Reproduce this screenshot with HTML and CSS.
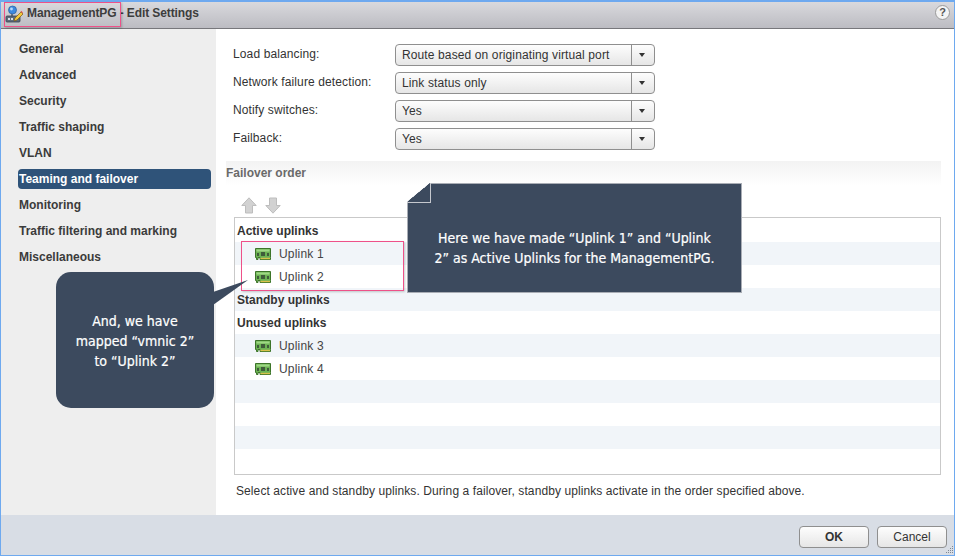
FILE: index.html
```html
<!DOCTYPE html>
<html lang="en">
<head>
<meta charset="utf-8">
<title>ManagementPG - Edit Settings</title>
<link rel="stylesheet" href="styles.css">
</head>
<body>
<div class="window">
  <header class="titlebar">
    <svg class="title-icon" width="18" height="18" viewBox="0 0 18 18">
      <rect x="1" y="11" width="14" height="6" rx="1" fill="#5d6b7c" stroke="#39424e" stroke-width=".8"/>
      <rect x="3" y="13" width="2" height="2" fill="#d5dde6"/><rect x="6" y="13" width="2" height="2" fill="#d5dde6"/>
      <path d="M7 11V8" stroke="#39424e" stroke-width="1.2"/>
      <circle cx="7.500" cy="5" r="4" fill="#3d8ae0" stroke="#2b5f9e" stroke-width=".7"/>
      <circle cx="6.500" cy="4" r="1.400" fill="#b7dafa"/>
      <path d="M9 16l1-3 6-6 2 2-6 6z" fill="#f2c83c" stroke="#7a5a12" stroke-width=".7"/>
      <path d="M15.500 6.500l2 2 .5-.8-1.700-1.900z" fill="#e4574c"/>
    </svg>
    <span class="title-text">ManagementPG - Edit Settings</span>
    <span class="help">?</span>
  </header>
  <div class="body">
    <nav class="sidebar">
      <a class="nav-item">General</a>
      <a class="nav-item">Advanced</a>
      <a class="nav-item">Security</a>
      <a class="nav-item">Traffic shaping</a>
      <a class="nav-item">VLAN</a>
      <a class="nav-item selected">Teaming and failover</a>
      <a class="nav-item">Monitoring</a>
      <a class="nav-item">Traffic filtering and marking</a>
      <a class="nav-item">Miscellaneous</a>
    </nav>
    <main class="content">
      <div class="form">
        <div class="form-row"><label class="form-label">Load balancing:</label><div class="select"><span class="select-value">Route based on originating virtual port</span><span class="select-arrow"></span></div></div>
        <div class="form-row"><label class="form-label">Network failure detection:</label><div class="select"><span class="select-value">Link status only</span><span class="select-arrow"></span></div></div>
        <div class="form-row"><label class="form-label">Notify switches:</label><div class="select"><span class="select-value">Yes</span><span class="select-arrow"></span></div></div>
        <div class="form-row"><label class="form-label">Failback:</label><div class="select"><span class="select-value">Yes</span><span class="select-arrow"></span></div></div>
      </div>
      <h2 class="section-title">Failover order</h2>
      <div class="toolbar">
        <svg width="16" height="17" viewBox="0 0 16 17"><path d="M8 .8L15.200 8.500H11.500V16H4.500V8.500H.8z" fill="#d2d2d2" stroke="#bdbdbd"/></svg>
        <svg width="16" height="17" viewBox="0 0 16 17"><path d="M8 16.200L15.200 8.500H11.500V1H4.500V8.500H.8z" fill="#d2d2d2" stroke="#bdbdbd"/></svg>
      </div>
      <div class="list">
        <div class="row head">Active uplinks</div>
        <div class="row item shade"><svg class="nic" viewBox="0 0 16 12"><use href="#nic"/></svg>Uplink 1</div>
        <div class="row item"><svg class="nic" viewBox="0 0 16 12"><use href="#nic"/></svg>Uplink 2</div>
        <div class="row head shade">Standby uplinks</div>
        <div class="row head">Unused uplinks</div>
        <div class="row item shade"><svg class="nic" viewBox="0 0 16 12"><use href="#nic"/></svg>Uplink 3</div>
        <div class="row item"><svg class="nic" viewBox="0 0 16 12"><use href="#nic"/></svg>Uplink 4</div>
        <div class="row shade"></div>
        <div class="row"></div>
        <div class="row shade"></div>
        <div class="row"></div>
      </div>
      <p class="hint">Select active and standby uplinks. During a failover, standby uplinks activate in the order specified above.</p>
    </main>
  </div>
  <footer class="footer">
    <button class="btn ok">OK</button>
    <button class="btn">Cancel</button>
  </footer>

  <svg class="defs" width="0" height="0">
    <symbol id="nic" viewBox="0 0 16 12">
      <path d="M.5 .5H15.500V9.500H15.500V11.500H5V9.500H3V11.500H1.500V9.500H.5z" fill="#6cb254" stroke="#3c7429"/>
      <rect x="1.500" y="1.500" width="13" height="2" fill="#9fd885"/>
      <rect x="2" y="5" width="2" height="3" fill="#3f5c3a"/>
      <rect x="6" y="4" width="4" height="4" fill="#3f5c3a"/>
      <rect x="12" y="5" width="2" height="3" fill="#3f5c3a"/>
      <rect x="5.500" y="9.800" width="9.500" height="1.400" fill="#d8c24c"/>
    </symbol>
  </svg>

  <div class="mark mark-title"></div>
  <div class="mark mark-uplinks"></div>
  <svg class="grip" width="10" height="10" viewBox="0 0 10 10"><path d="M8 1h1v1H8zM6 3h1v1H6zM8 3h1v1H8zM4 5h1v1H4zM6 5h1v1H6zM8 5h1v1H8zM2 7h1v1H2zM4 7h1v1H4zM6 7h1v1H6zM8 7h1v1H8z" fill="#7d8794"/></svg>

  <div class="callout callout-note">
    <span class="fold"></span>
    <p>Here we have made “Uplink 1” and “Uplink 2” as Active Uplinks for the ManagementPG.</p>
  </div>
  <div class="callout callout-bubble">
    <p>And, we have mapped “vmnic 2” to “Uplink 2”</p>
    <svg class="tail" width="36" height="26" viewBox="0 0 36 26"><path d="M0 12L35 0 0 25z" fill="#3c4a5e"/></svg>
  </div>
</div>
</body>
</html>
```
FILE: styles.css
```css
* { box-sizing: border-box; }
html, body { margin: 0; padding: 0; }
body { width: 955px; height: 556px; overflow: hidden; background: #fff; font-family: "Liberation Sans", Arial, sans-serif; font-size: 12px; color: #333; }
.window { position: relative; width: 955px; height: 556px; display: flex; flex-direction: column; border: 1px solid #6ea9ef; border-top-width: 2px; background: #fff; }
.titlebar { flex: none; height: 27px; display: flex; align-items: center; padding: 0 4px 4px 4px; background: linear-gradient(#d9d9dd, #bcbcc2); border-bottom: 1px solid #77777b; }
.title-icon { margin-right: 4px; margin-top: 2px; }
.title-text { font-weight: 700; font-size: 12px; color: #3d3d3d; letter-spacing: -.1px; }
.help { margin-left: auto; width: 15px; height: 15px; border-radius: 50%; background: #f4f4f4; border: 1px solid #9a9a9a; color: #555; font-weight: 700; font-size: 11px; line-height: 13px; text-align: center; margin-right: 0; margin-top: -2px; }
.body { flex: 1; display: flex; min-height: 0; }
.sidebar { flex: none; width: 215px; background: #eeeeee; padding: 10px 5px 0 17px; display: flex; flex-direction: column; gap: 6px; }
.nav-item { display: block; height: 20px; line-height: 20px; padding-left: 1px; font-weight: 700; font-size: 12px; color: #3b3b3b; }
.nav-item.selected { background: #2f5379; color: #fff; border-radius: 4px; }
.content { flex: 1; min-width: 0; padding: 15px 13px 0 10px; display: flex; flex-direction: column; }
.form { display: flex; flex-direction: column; gap: 6px; padding-left: 7px; }
.form-row { display: flex; align-items: center; height: 22px; }
.form-label { width: 162px; color: #333; letter-spacing: .12px; position: relative; top: -1px; }
.select { width: 260px; height: 22px; display: flex; align-items: center; border: 1px solid #8f8f8f; border-radius: 4px; background: linear-gradient(#fdfdfd, #e6e6e6); }
.select-value { flex: 1; padding-left: 6px; color: #333; letter-spacing: .12px; }
.select-arrow { flex: none; width: 23px; height: 20px; border-left: 1px solid #8f8f8f; position: relative; }
.select-arrow::after { content: ""; position: absolute; left: 7px; top: 8px; border: 3.500px solid transparent; border-top: 4px solid #333; border-bottom: 0; }
.section-title { margin: 11px 0 0; height: 24px; padding-top: 5px; font-size: 12px; font-weight: 700; color: #6a6a6a; background: linear-gradient(#f3f3f3, #ffffff); }
.toolbar { height: 32px; display: flex; align-items: center; gap: 8px; padding: 8px 0 0 15px; }
.list { height: 258px; margin-left: 8px; border: 1px solid #c9c9c9; padding-top: 1px; }
.row { height: 23px; line-height: 23px; padding-left: 2px; padding-top: 1px; }
.row.shade { background: #f1f5f9; }
.row.head { font-weight: 700; color: #333; }
.row.item { display: flex; align-items: center; padding-left: 20px; color: #444; letter-spacing: .2px; }
.nic { flex: none; margin-right: 8px; width: 16px; height: 12px; }
.hint { margin: 9px 0 0 10px; color: #333; letter-spacing: .09px; }
.footer { flex: none; height: 40px; display: flex; justify-content: flex-end; align-items: flex-start; gap: 8px; padding: 11px 7px 0 0; background: #d8dde5; }
.btn { width: 70px; height: 22px; padding: 0; border: 1px solid #8f8f8f; border-radius: 4px; background: linear-gradient(#fdfdfd, #e6e6e6); font-family: "Liberation Sans", Arial, sans-serif; font-size: 12px; color: #333; }
.btn.ok { font-weight: 700; }
.defs { position: absolute; }
.grip { position: absolute; right: 0; bottom: 0; }
.mark { position: absolute; border: 1px solid #ee5189; box-shadow: 1px 1px 2px rgba(0,0,0,.2); }
.mark-title { left: 3px; top: 0; width: 117px; height: 25px; }
.mark-uplinks { left: 240px; top: 239px; width: 163px; height: 50px; }
.callout { position: absolute; background: #3c4a5e; color: #fff; font-family: "DejaVu Sans Condensed", "DejaVu Sans", sans-serif; font-size: 14px; font-stretch: condensed; text-align: center; -webkit-text-stroke: .2px #fff; }
.callout p { margin: 0; }
.callout-note { left: 406px; top: 181px; width: 335px; height: 110px; border: 1px solid #a9adb5; padding: 44px 26px 0; line-height: 20px; clip-path: polygon(23px 0, 100% 0, 100% 100%, 0 100%, 0 19px); }
.fold { position: absolute; left: -1px; top: -1px; width: 24px; height: 20px; background: linear-gradient(to bottom right, #fff 50%, #3c4a5e 50%); border-right: 1px solid #c5c8ce; border-bottom: 1px solid #c5c8ce; }
.callout-bubble { left: 55px; top: 270px; width: 158px; height: 136px; border-radius: 15px; padding: 39px 14px 0; line-height: 20px; }
.tail { position: absolute; left: 157px; top: 8px; }
```
